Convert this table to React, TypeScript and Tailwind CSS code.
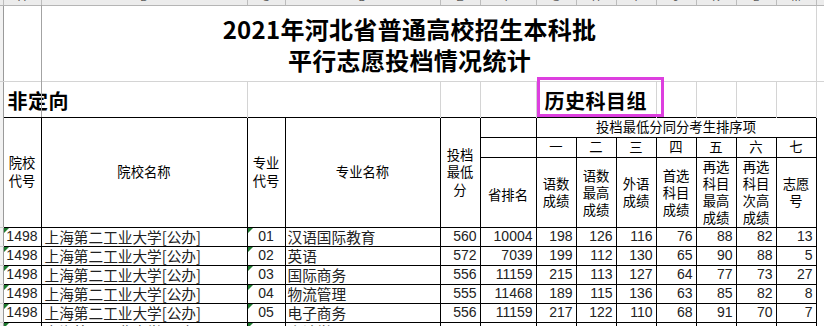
import React from "react";

const CJK = "font-['Noto_Sans_CJK_SC',sans-serif]";
const NUM = "font-['Liberation_Sans','Noto_Sans_CJK_SC',sans-serif]";

const letters = ["A", "B", "C", "D", "E", "F", "G", "H", "I", "J", "K", "L", "M"];

const rows: string[][] = [
  ["1498", "上海第二工业大学[公办]", "01", "汉语国际教育", "560", "10004", "198", "126", "116", "76", "88", "82", "13"],
  ["1498", "上海第二工业大学[公办]", "02", "英语", "572", "7039", "199", "112", "130", "65", "90", "88", "5"],
  ["1498", "上海第二工业大学[公办]", "03", "国际商务", "556", "11159", "215", "113", "127", "64", "77", "73", "27"],
  ["1498", "上海第二工业大学[公办]", "04", "物流管理", "555", "11468", "189", "115", "136", "63", "85", "82", "8"],
  ["1498", "上海第二工业大学[公办]", "05", "电子商务", "556", "11159", "217", "122", "110", "68", "91", "70", "7"],
  ["1498", "上海第二工业大学[公办]", "06", "会计学", "557", "10892", "201", "118", "121", "70", "86", "79", "9"],
];

const subHeads: string[][] = [
  ["语数", "成绩"],
  ["语数", "最高", "成绩"],
  ["外语", "成绩"],
  ["首选", "科目", "成绩"],
  ["再选", "科目", "最高", "成绩"],
  ["再选", "科目", "次高", "成绩"],
  ["志愿", "号"],
];

const nums = ["一", "二", "三", "四", "五", "六", "七"];

function Tri() {
  return (
    <span className="absolute left-0 top-0 h-0 w-0 border-t-[5px] border-r-[5px] border-t-[#1d7a2f] border-r-transparent" />
  );
}

function Lines({ items, lh }: { items: string[]; lh: string }) {
  return (
    <div className={`${CJK} text-[13.33px] ${lh} text-center text-black`}>
      {items.map((t, i) => (
        <div key={i}>{t}</div>
      ))}
    </div>
  );
}

const hd = "border border-black text-[13px] leading-[17px]";
const rowHead = "bg-[#f2f2f2] border-r border-b border-r-[#9a9a9a] border-b-[#cfcfcf] text-[0px] leading-[0px]";
const dNum = `border border-black ${NUM} text-[14px] leading-[17px] text-[#222] whitespace-nowrap`;
const dCjk = `border border-black ${CJK} text-[14.67px] leading-[17px] text-[#222] whitespace-nowrap overflow-hidden`;

export default function App() {
  return (
    <div className="relative h-[326px] w-[824px] overflow-hidden bg-white">
      <table className="w-[824px] table-fixed border-collapse">
        <colgroup>
          <col className="w-[3px]" />
          <col className="w-[38px]" />
          <col className="w-[206px]" />
          <col className="w-[38px]" />
          <col className="w-[155px]" />
          <col className="w-[40px]" />
          <col className="w-[56px]" />
          <col className="w-[40px]" />
          <col className="w-[40px]" />
          <col className="w-[40px]" />
          <col className="w-[40px]" />
          <col className="w-[40px]" />
          <col className="w-[40px]" />
          <col className="w-[40px]" />
          <col className="w-[8px]" />
        </colgroup>
        <tbody>
          {/* column header strip */}
          <tr className="h-[5px]">
            <td className="bg-[#ececec] border-r border-b border-r-[#bdbdbd] border-b-[#b5b5b5] text-[0px] leading-[0px]" />
            {letters.map((l) => (
              <td key={l} className="bg-[#ececec] border-r border-b border-r-[#bdbdbd] border-b-[#b5b5b5] text-[0px] leading-[0px]">
                <div className="h-[4px] overflow-hidden">
                  <div className={`${NUM} -mt-[8px] text-center text-[11px] leading-[11px] text-[#5a5a5a]`}>{l}</div>
                </div>
              </td>
            ))}
            <td className="bg-[#ececec] border-b border-b-[#b5b5b5] text-[0px] leading-[0px]" />
          </tr>

          {/* title */}
          <tr className="h-[76px]">
            <td className={rowHead} />
            <td colSpan={13} className="border-r border-b border-r-[#d4d4d4] border-b-[#d4d4d4] text-center">
              <div className={`${CJK} pt-[1px] text-[24px] font-bold leading-[31px] tracking-[0.3px] text-black`}>
                <div>2021年河北省普通高校招生本科批</div>
                <div>平行志愿投档情况统计</div>
              </div>
            </td>
            <td className="border-b border-b-[#d4d4d4]" />
          </tr>

          {/* 非定向 / 历史科目组 */}
          <tr className="h-[36px]">
            <td className="bg-[#f2f2f2] border-r border-r-[#9a9a9a]" />
            <td colSpan={2} className="border-r border-r-[#d4d4d4] pl-[4px]">
              <span className={`${CJK} pt-[3px] block text-[20px] font-bold leading-[24px] tracking-[0.5px] text-black`}>非定向</span>
            </td>
            <td colSpan={2} className="border-r border-r-[#d4d4d4]" />
            <td className="border-r border-r-[#d4d4d4]" />
            <td className="border-r border-r-[#d4d4d4]" />
            <td colSpan={3} className="border-r border-r-[#d4d4d4] pl-[8px]">
              <span className={`${CJK} pt-[3px] block text-[20px] font-bold leading-[24px] tracking-[0.5px] text-black`}>历史科目组</span>
            </td>
            <td className="border-r border-r-[#d4d4d4]" />
            <td className="border-r border-r-[#d4d4d4]" />
            <td className="border-r border-r-[#d4d4d4]" />
            <td className="border-r border-r-[#d4d4d4]" />
            <td />
          </tr>

          {/* header row 1 */}
          <tr className="h-[20px]">
            <td rowSpan={3} className={rowHead} />
            <td rowSpan={3} className={hd}>
              <Lines items={["院校", "代号"]} lh="leading-[18px]" />
            </td>
            <td rowSpan={3} className={hd}>
              <Lines items={["院校名称"]} lh="leading-[18px]" />
            </td>
            <td rowSpan={3} className={hd}>
              <Lines items={["专业", "代号"]} lh="leading-[18px]" />
            </td>
            <td rowSpan={3} className={hd}>
              <Lines items={["专业名称"]} lh="leading-[18px]" />
            </td>
            <td rowSpan={3} className={hd}>
              <Lines items={["投档", "最低", "分"]} lh="leading-[17.5px]" />
            </td>
            <td className={hd} />
            <td colSpan={7} className={hd}>
              <Lines items={["投档最低分同分考生排序项"]} lh="leading-[18px]" />
            </td>
            <td rowSpan={3} />
          </tr>
          <tr className="h-[20px]">
            <td className={hd} />
            {nums.map((n) => (
              <td key={n} className={hd}>
                <Lines items={[n]} lh="leading-[18px]" />
              </td>
            ))}
          </tr>
          <tr className="h-[70px]">
            <td className={hd}>
              <div className="pt-[6px]">
                <Lines items={["省排名"]} lh="leading-[18px]" />
              </div>
            </td>
            {subHeads.map((s, i) => (
              <td key={i} className={hd}>
                <Lines items={s} lh="leading-[17px]" />
              </td>
            ))}
          </tr>

          {/* data */}
          {rows.map((r, ri) => (
            <tr key={ri} className="h-[19px]">
              <td className={rowHead} />
              <td className={`${dNum} relative pr-[3px] text-right`}>
                <Tri />
                {r[0]}
              </td>
              <td className={`${dCjk} pl-[3px] text-left`}>{r[1]}</td>
              <td className={`${dNum} relative text-center`}>
                <Tri />
                {r[2]}
              </td>
              <td className={`${dCjk} pl-[2px] text-left`}>{r[3]}</td>
              {r.slice(4).map((v, vi) => (
                <td key={vi} className={`${dNum} pr-[3px] text-right`}>
                  {v}
                </td>
              ))}
              <td className="text-[0px] leading-[0px]" />
            </tr>
          ))}
        </tbody>
      </table>

      {/* frozen pane line */}
      <div className="absolute left-[41px] top-[5px] h-[112px] w-px bg-[#a3a3a3]" />
      {/* highlight box */}
      <div className="absolute left-[537px] top-[77px] h-[40px] w-[127px] border-[3px] border-[#dd3fdf]" />
    </div>
  );
}
